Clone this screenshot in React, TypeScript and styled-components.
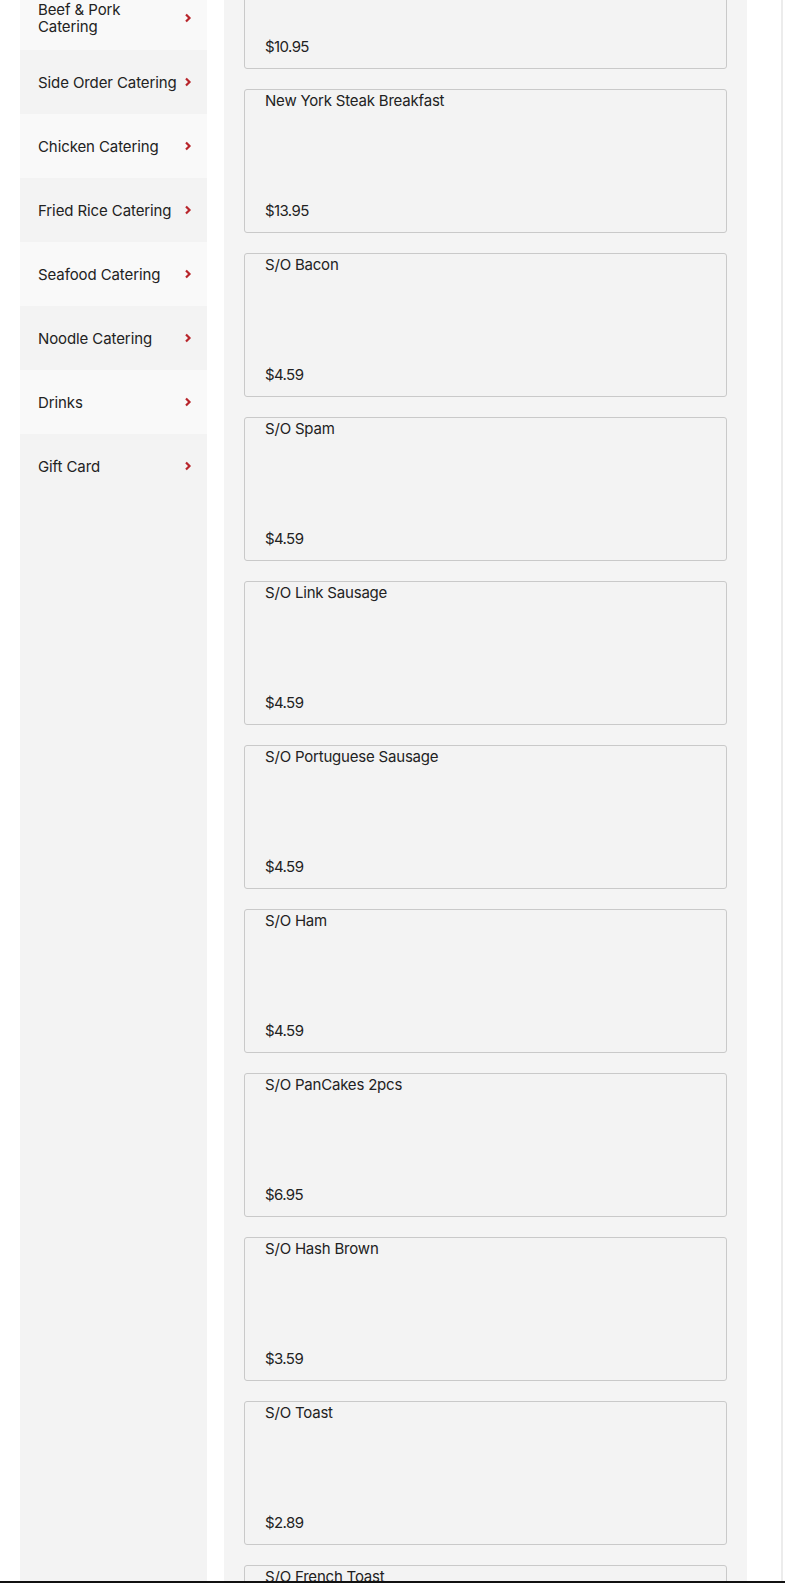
import React from 'react';
import styled, {createGlobalStyle} from "styled-components";

const GlobalStyle = createGlobalStyle`
  html, body {
    margin: 0;
    padding: 0;
    background: #fff;
    height: 1583px;
    overflow: hidden;
  }

  body {
    font-family: Inter, "Open Sans", sans-serif;
    color: #222;
  }
`;

const Page = styled.div`
  display: flex;
  align-items: stretch;
  margin-top: -95px;
  padding-left: 20px;
  border-right: 2px solid #ececec;
  width: 783px;
  box-sizing: border-box;
`;

const Sidebar = styled.nav`
  flex: 0 0 187px;
  margin-top: 81px;
  background: #f3f3f3;
  display: flex;
  flex-direction: column;
`;

const NavItem = styled.a<{ $light: boolean }>`
  display: flex;
  align-items: center;
  justify-content: space-between;
  height: 64px;
  padding: 0 15px 0 18px;
  background: ${p => p.$light ? '#f9f9f9' : '#f3f3f3'};
  font-size: 15px;
  line-height: 17px;
  letter-spacing: -0.1px;
  color: #222;
  text-decoration: none;
`;

const NavLabel = styled.span`
  max-width: 140px;
`;

const Chevron = styled.svg`
  flex: 0 0 auto;
  width: 8px;
  height: 10px;
`;

const Content = styled.main`
  flex: 0 0 523px;
  margin-left: 17px;
  background: #f4f4f4;
  padding: 20px;
  box-sizing: border-box;
  display: flex;
  flex-direction: column;
  gap: 20px;
`;

const Card = styled.div`
  flex: 0 0 144px;
  height: 144px;
  box-sizing: border-box;
  border: 1px solid #c9c9c9;
  border-radius: 3px;
  background: #f3f3f3;
  padding: 1px 20px 11px;
  display: flex;
  flex-direction: column;
  justify-content: space-between;
  font-size: 15px;
  line-height: 20px;
  letter-spacing: -0.2px;
`;

const ItemName = styled.div``;

const Price = styled.div`
  letter-spacing: -0.6px;
`;

const BottomBar = styled.div`
  position: fixed;
  left: 0;
  right: 0;
  bottom: 0;
  height: 2px;
  background: #111;
`;

const categories = [
    'Beef & Pork Catering',
    'Side Order Catering',
    'Chicken Catering',
    'Fried Rice Catering',
    'Seafood Catering',
    'Noodle Catering',
    'Drinks',
    'Gift Card',
];

const items = [
    {name: 'Loco Moco Breakfast', price: '$10.95'},
    {name: 'New York Steak Breakfast', price: '$13.95'},
    {name: 'S/O Bacon', price: '$4.59'},
    {name: 'S/O Spam', price: '$4.59'},
    {name: 'S/O Link Sausage', price: '$4.59'},
    {name: 'S/O Portuguese Sausage', price: '$4.59'},
    {name: 'S/O Ham', price: '$4.59'},
    {name: 'S/O PanCakes 2pcs', price: '$6.95'},
    {name: 'S/O Hash Brown', price: '$3.59'},
    {name: 'S/O Toast', price: '$2.89'},
    {name: 'S/O French Toast', price: '$3.95'},
];

export default function App() {
    return (
        <>
            <GlobalStyle/>
            <Page>
                <Sidebar>
                    {categories.map((c, i) => (
                        <NavItem key={c} href="#" $light={i % 2 === 0}>
                            <NavLabel>{c}</NavLabel>
                            <Chevron viewBox="0 0 8 10">
                                <polyline points="2,1.5 5.5,5 2,8.5" fill="none" stroke="#b8252b"
                                          strokeWidth="2.2"/>
                            </Chevron>
                        </NavItem>
                    ))}
                </Sidebar>
                <Content>
                    {items.map(it => (
                        <Card key={it.name}>
                            <ItemName>{it.name}</ItemName>
                            <Price>{it.price}</Price>
                        </Card>
                    ))}
                </Content>
            </Page>
            <BottomBar/>
        </>
    )
}
